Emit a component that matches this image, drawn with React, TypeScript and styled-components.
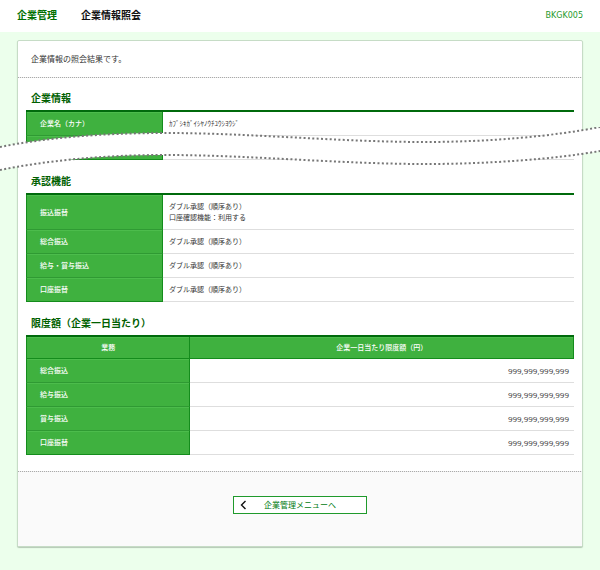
import React from "react";
import styled, { createGlobalStyle, css } from "styled-components";

const GlobalStyle = createGlobalStyle`
  *, *::before, *::after { box-sizing: border-box; }
  body {
    margin: 0;
    background: #ecffec;
    color: #333;
    font-family: "Open Sans", "Noto Sans CJK JP", sans-serif;
    font-size: 8px;
    line-height: 12px;
  }
`;

const Header = styled.header`
  display: flex;
  align-items: center;
  gap: 24px;
  height: 32px;
  padding: 0 17px 2px;
  background: #fff;
`;

const Category = styled.p`
  margin: 0;
  font-size: 10px;
  font-weight: 700;
  color: #006f00;
`;

const Title = styled.h1`
  margin: 0;
  font-size: 10px;
  font-weight: 700;
  color: #111;
`;

const ScreenId = styled.span`
  margin-left: auto;
  padding-top: 2px;
  font-family: "DejaVu Sans", sans-serif;
  color: #1f9a2c;
`;

const Card = styled.main`
  margin: 8px 17px 22px;
  border: 1px solid #c6dcc6;
  border-radius: 2px;
  background: #fff;
  box-shadow: 0 1px 1px #b5c8b5;
`;

const dottedLine = css`
  background-image: repeating-linear-gradient(90deg, #aaa 0 1px, #eee 1px 2px);
  background-size: 100% 1px;
  background-repeat: no-repeat;
`;

const Intro = styled.p`
  ${dottedLine}
  background-position: bottom;
  margin: 0;
  padding: 12px 13px 13px;
`;

const Content = styled.div`
  padding: 12px 8px 16px;
`;

const Section = styled.section`
  position: relative;
  & + & {
    margin-top: 13px;
  }
`;

const Heading = styled.h2`
  margin: 0;
  padding: 0 5px 4px;
  font-size: 10px;
  line-height: 16px;
  font-weight: 700;
  color: #006000;
`;

const Table = styled.table`
  width: 100%;
  border-collapse: separate;
  border-spacing: 0;
  border-top: 2px solid #006a0c;
  table-layout: fixed;
`;

const LabelCol = styled.col<{ $wide?: boolean }>`
  width: ${(p) => (p.$wide ? "30%" : "25%")};
`;

const HeadCell = styled.th<{ $column?: boolean }>`
  padding: ${(p) => (p.$column ? 5 : 6)}px 13px;
  background: #3fb13f;
  border: solid #148c1c;
  border-width: 0 1px 1px;
  box-shadow: inset 0 1px #4cbc4c;
  color: #fff;
  font-size: 7px;
  line-height: 11px;
  font-weight: 500;
  text-align: ${(p) => (p.$column ? "center" : "left")};

  tbody tr:not(:last-child) > & {
    border-bottom-color: #2f9a33;
  }
  & + & {
    border-left-width: 0;
  }
`;

const Cell = styled.td<{ $amount?: boolean }>`
  padding: 6px ${(p) => (p.$amount ? 5 : 6)}px;
  border-bottom: 1px solid #dedede;
  font-size: ${(p) => (p.$amount ? 8 : 7)}px;
  line-height: 11px;
  text-align: ${(p) => (p.$amount ? "right" : "left")};
`;

const Wave = styled.svg`
  position: absolute;
  top: 37px;
  left: -26px;
  width: calc(100% + 52px);
  height: 52px;
  pointer-events: none;
`;

const Footer = styled.footer`
  ${dottedLine}
  background-color: #fafafa;
  background-position: top;
  display: flex;
  justify-content: center;
  padding: 25px 14px 32px;
`;

const MenuButton = styled.button`
  display: grid;
  grid-template-columns: 16px 1fr 16px;
  align-items: center;
  width: 134px;
  height: 18px;
  padding: 0 2px;
  border: 1px solid #1f9a2c;
  background: #fff;
  color: #007a10;
  font: inherit;
  line-height: 12px;
  text-align: center;
  cursor: pointer;
`;

const Chevron = () => (
  <svg width="16" height="10" viewBox="0 0 16 10" aria-hidden="true">
    <path d="M9.5 1 5.5 5l4 4" fill="none" stroke="#111" strokeWidth="1.4" />
  </svg>
);

const upperEdge = "M0 20C45 11 100 6 165 6C250 6 340 15 425 15C490 15 555 9 600 0";
const lowerEdge = "M0 43C45 34 100 28 165 28C250 28 340 37 425 37C490 37 555 32 600 24";

const TornBand = () => (
  <Wave viewBox="0 0 600 52" preserveAspectRatio="none" aria-hidden="true">
    <path
      d={`${upperEdge}V24C555 32 490 37 425 37C340 37 250 28 165 28C100 28 45 34 0 43Z`}
      fill="#fff"
    />
    <g fill="none" stroke="#777" strokeWidth="2" strokeDasharray="2 2.35">
      <path d={upperEdge} />
      <path d={lowerEdge} />
    </g>
  </Wave>
);

const approvals = [
  { label: "振込振替", lines: ["ダブル承認（順序あり）", "口座確認機能：利用する"] },
  { label: "総合振込", lines: ["ダブル承認（順序あり）"] },
  { label: "給与・賞与振込", lines: ["ダブル承認（順序あり）"] },
  { label: "口座振替", lines: ["ダブル承認（順序あり）"] },
];

const limits = ["総合振込", "給与振込", "賞与振込", "口座振替"];

export default function App() {
  return (
    <>
      <GlobalStyle />
      <Header>
        <Category>企業管理</Category>
        <Title>企業情報照会</Title>
        <ScreenId>BKGK005</ScreenId>
      </Header>
      <Card>
        <Intro>企業情報の照会結果です。</Intro>
        <Content>
          <Section>
            <Heading>企業情報</Heading>
            <Table>
              <colgroup>
                <LabelCol />
                <col />
              </colgroup>
              <tbody>
                <tr>
                  <HeadCell scope="row">企業名（カナ）</HeadCell>
                  <Cell>ｶﾌﾞｼｷｶﾞｲｼﾔﾉｳﾁﾕｳｼﾖｳｼﾞ</Cell>
                </tr>
                <tr>
                  <HeadCell scope="row">&nbsp;</HeadCell>
                  <Cell />
                </tr>
              </tbody>
            </Table>
            <TornBand />
          </Section>
          <Section>
            <Heading>承認機能</Heading>
            <Table>
              <colgroup>
                <LabelCol />
                <col />
              </colgroup>
              <tbody>
                {approvals.map((row) => (
                  <tr key={row.label}>
                    <HeadCell scope="row">{row.label}</HeadCell>
                    <Cell>
                      {row.lines.map((line) => (
                        <div key={line}>{line}</div>
                      ))}
                    </Cell>
                  </tr>
                ))}
              </tbody>
            </Table>
          </Section>
          <Section>
            <Heading>限度額（企業一日当たり）</Heading>
            <Table>
              <colgroup>
                <LabelCol $wide />
                <col />
              </colgroup>
              <thead>
                <tr>
                  <HeadCell scope="col" $column>業務</HeadCell>
                  <HeadCell scope="col" $column>企業一日当たり限度額（円）</HeadCell>
                </tr>
              </thead>
              <tbody>
                {limits.map((label) => (
                  <tr key={label}>
                    <HeadCell scope="row">{label}</HeadCell>
                    <Cell $amount>999,999,999,999</Cell>
                  </tr>
                ))}
              </tbody>
            </Table>
          </Section>
        </Content>
        <Footer>
          <MenuButton type="button">
            <Chevron />
            <span>企業管理メニューへ</span>
          </MenuButton>
        </Footer>
      </Card>
    </>
  );
}
